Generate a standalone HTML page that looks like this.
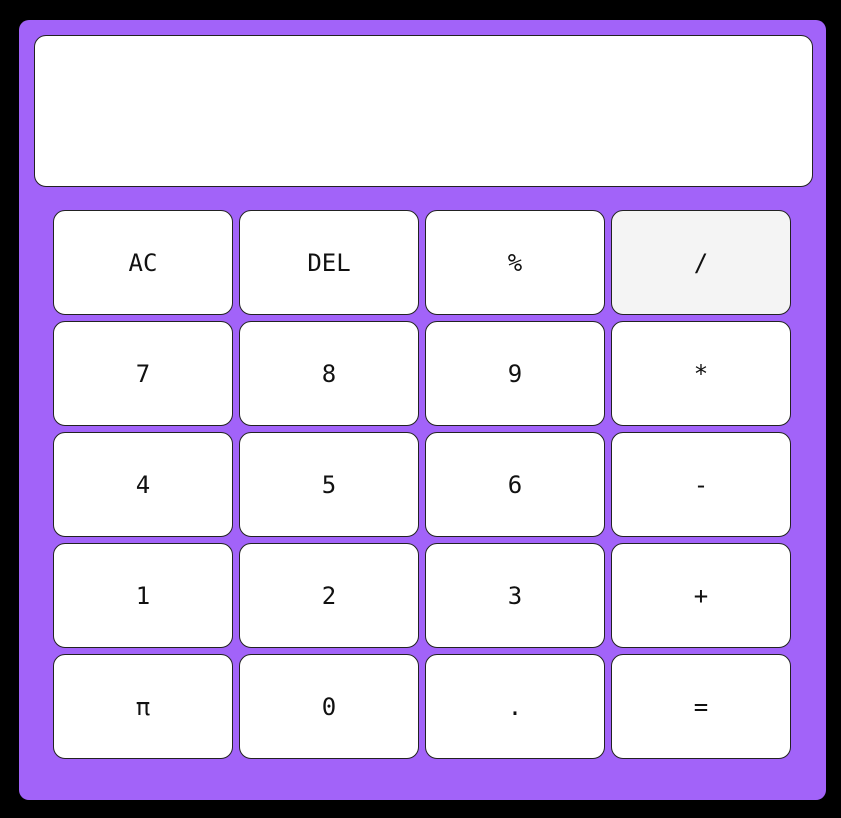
<!DOCTYPE html>
<html><head><meta charset="utf-8"><style>
html,body{margin:0;padding:0;background:#000;width:841px;height:818px;overflow:hidden}
.calc{position:absolute;left:19px;top:20px;width:807px;height:780px;background:#a263f9;border-radius:10px}
.disp{position:absolute;left:15px;top:15px;width:777px;height:150px;background:#fff;border:1px solid #222;border-radius:12px}
.b{position:absolute;width:178px;height:103px;background:#fff;border:1px solid #222;border-radius:12px;display:flex;align-items:center;justify-content:center;font-family:"DejaVu Sans Mono","Liberation Mono",monospace;font-size:24px;color:#111}
</style></head><body>
<div class="calc"><div class="disp"></div></div>
<div class="b" style="left:53px;top:210px">AC</div>
<div class="b" style="left:239px;top:210px">DEL</div>
<div class="b" style="left:425px;top:210px">%</div>
<div class="b" style="left:611px;top:210px;background:#f4f4f4">/</div>
<div class="b" style="left:53px;top:321px">7</div>
<div class="b" style="left:239px;top:321px">8</div>
<div class="b" style="left:425px;top:321px">9</div>
<div class="b" style="left:611px;top:321px">*</div>
<div class="b" style="left:53px;top:432px">4</div>
<div class="b" style="left:239px;top:432px">5</div>
<div class="b" style="left:425px;top:432px">6</div>
<div class="b" style="left:611px;top:432px">-</div>
<div class="b" style="left:53px;top:543px">1</div>
<div class="b" style="left:239px;top:543px">2</div>
<div class="b" style="left:425px;top:543px">3</div>
<div class="b" style="left:611px;top:543px">+</div>
<div class="b" style="left:53px;top:654px">π</div>
<div class="b" style="left:239px;top:654px">0</div>
<div class="b" style="left:425px;top:654px">.</div>
<div class="b" style="left:611px;top:654px">=</div>
</body></html>
